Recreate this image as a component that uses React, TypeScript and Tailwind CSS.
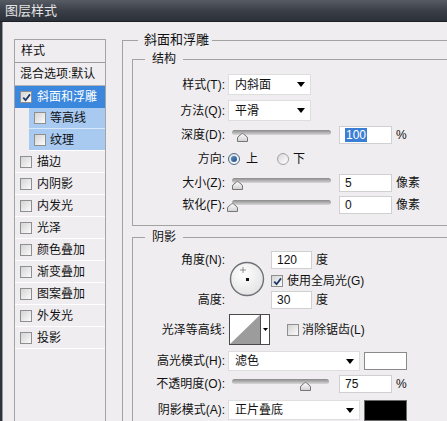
import React from 'react';

function Check({ checked = false }: { checked?: boolean }) {
  return (
    <span className="flex h-[12px] w-[12px] shrink-0 items-center justify-center border border-[#8e8f8f] bg-gradient-to-br from-[#d4d4d4] to-[#fbfbfb]">
      {checked && (
        <svg width="9" height="9" viewBox="0 0 9 9">
          <path d="M1.2 4.6 L3.6 7.2 L8 1.4" fill="none" stroke="#22386a" strokeWidth="1.8" />
        </svg>
      )}
    </span>
  );
}

function Radio({ checked = false }: { checked?: boolean }) {
  return (
    <span
      className={`flex h-[12px] w-[12px] shrink-0 items-center justify-center rounded-full border bg-gradient-to-br from-[#d9d9d9] to-white ${
        checked ? 'border-[#4e6a8a]' : 'border-[#a2a2a2]'
      }`}
    >
      {checked && <span className="h-[6px] w-[6px] rounded-full bg-gradient-to-br from-[#5c8fc4] to-[#1f4f86]" />}
    </span>
  );
}

function Select({ value, className }: { value: string; className: string }) {
  return (
    <div className={`flex items-center justify-between border border-[#dedede] bg-white pl-[6px] pr-[5px] ${className}`}>
      <span>{value}</span>
      <svg width="8" height="5" viewBox="0 0 8 5">
        <path d="M0 0 H8 L4 5 Z" fill="#000" />
      </svg>
    </div>
  );
}

function Slider({ track, thumb }: { track: string; thumb: string }) {
  return (
    <div className={`relative ml-[4px] h-[18px] shrink-0 ${track}`}>
      <div className="absolute inset-x-0 top-[4px] h-[5px] rounded-full bg-gradient-to-b from-[#8a8a8a] to-[#d8d8d8]" />
      <svg className={`absolute top-[7px] ${thumb}`} width="11" height="9" viewBox="0 0 11 9">
        <defs>
          <linearGradient id="tg" x1="0" y1="0" x2="0" y2="1">
            <stop offset="0" stopColor="#ffffff" />
            <stop offset="1" stopColor="#cfcfcf" />
          </linearGradient>
        </defs>
        <path d="M0.5 8.5 V5 Q0.5 4 2 3 L4.5 1 Q5.5 0.3 6.5 1 L9 3 Q10.5 4 10.5 5 V8.5 Z" fill="url(#tg)" stroke="#767676" />
      </svg>
    </div>
  );
}

function Field({ children, className = '' }: { children: React.ReactNode; className?: string }) {
  return (
    <div className={`flex h-[18px] shrink-0 items-center border border-[#d0d0d0] bg-white pl-[5px] ${className}`}>
      {children}
    </div>
  );
}

const others = ['描边', '内阴影', '内发光', '光泽', '颜色叠加', '渐变叠加', '图案叠加', '外发光', '投影'];

function StyleList() {
  return (
    <div className="mt-[5px] h-[400px] w-[92px] shrink-0 border border-[#a4a4a4]">
      <div className="flex h-[23px] items-center border-b border-[#9c9c9c] pl-[6px]">样式</div>
      <div className="flex h-[23px] items-center border-b border-[#b4b4b4] pl-[5px]">混合选项:默认</div>
      <div className="flex h-[22px] items-center gap-[5px] bg-[#3a87dd] pl-[5px] text-white">
        <Check checked />
        斜面和浮雕
      </div>
      <div className="ml-[14px] flex h-[21px] items-center gap-[4px] border-b border-[#d9e8f8] bg-[#a8caf1] pl-[5px]">
        <Check />
        等高线
      </div>
      <div className="ml-[14px] flex h-[22px] items-center gap-[4px] border-b border-white bg-[#a8caf1] pl-[5px]">
        <Check />
        纹理
      </div>
      {others.map((name) => (
        <div key={name} className="flex h-[22px] items-center gap-[5px] border-b border-white pl-[5px]">
          <Check />
          {name}
        </div>
      ))}
    </div>
  );
}

function Label({ children }: { children: React.ReactNode }) {
  return <div className="w-[92px] shrink-0 text-right">{children}</div>;
}

function Structure() {
  return (
    <fieldset className="ml-[9px] mt-[3px] w-[330px] border border-[#a2a2a2] p-0">
      <legend className="ml-[12px] px-[7px] leading-[16px]">结构</legend>
      <div className="pb-[11px] pt-[7px]">
        <div className="flex h-[21px] items-center">
          <Label>样式(T):</Label>
          <Select value="内斜面" className="ml-[3px] h-[21px] w-[83px]" />
        </div>
        <div className="mt-[5px] flex h-[21px] items-center">
          <Label>方法(Q):</Label>
          <Select value="平滑" className="ml-[3px] h-[21px] w-[83px]" />
        </div>
        <div className="mt-[5px] flex h-[18px] items-center">
          <Label>深度(D):</Label>
          <div className="ml-[3px] flex items-center">
            <Slider track="w-[99px]" thumb="left-[5px]" />
            <Field className="ml-[8px] w-[53px] border-[#8fbbe6] pl-[2px]">
              <span className="bg-[#3a7fd4] px-[1px] leading-[14px] text-white">100</span>
            </Field>
            <span className="ml-[4px]">%</span>
          </div>
        </div>
        <div className="mt-[6px] flex h-[18px] items-center">
          <Label>方向:</Label>
          <div className="ml-[3px] flex items-center">
            <Radio checked />
            <span className="ml-[6px]">上</span>
            <span className="ml-[19px]">
              <Radio />
            </span>
            <span className="ml-[4px]">下</span>
          </div>
        </div>
        <div className="mt-[6px] flex h-[18px] items-center">
          <Label>大小(Z):</Label>
          <div className="ml-[3px] flex items-center">
            <Slider track="w-[99px]" thumb="left-0" />
            <Field className="ml-[8px] w-[53px]">5</Field>
            <span className="ml-[4px]">像素</span>
          </div>
        </div>
        <div className="mt-[4px] flex h-[18px] items-center">
          <Label>软化(F):</Label>
          <div className="ml-[3px] flex items-center">
            <Slider track="w-[99px]" thumb="left-[-5px]" />
            <Field className="ml-[8px] w-[53px]">0</Field>
            <span className="ml-[4px]">像素</span>
          </div>
        </div>
      </div>
    </fieldset>
  );
}

function AngleDial() {
  return (
    <svg width="36" height="36" viewBox="0 0 36 36">
      <defs>
        <radialGradient id="dg" cx="0.4" cy="0.35" r="0.7">
          <stop offset="0" stopColor="#ffffff" />
          <stop offset="1" stopColor="#e2e2e2" />
        </radialGradient>
      </defs>
      <circle cx="18" cy="18" r="16.5" fill="url(#dg)" stroke="#6e7176" strokeWidth="1.4" />
      <rect x="17" y="17" width="3" height="3" fill="#111" />
      <path d="M14 6.5 V11.5 M11.5 9 H16.5" stroke="#333" strokeWidth="1" strokeDasharray="1 1" />
    </svg>
  );
}

function ContourSwatch() {
  return (
    <div className="flex h-[31px] items-stretch">
      <svg width="32" height="31" viewBox="0 0 32 31">
        <rect x="0.5" y="0.5" width="31" height="30" fill="#fff" stroke="#4a4a4a" />
        <path d="M1 30 L31 1 V30 Z" fill="#9c9c9c" />
      </svg>
      <div className="flex w-[9px] items-center justify-center border-y border-r border-[#4a4a4a] bg-white">
        <svg width="5" height="3" viewBox="0 0 5 3">
          <path d="M0 0 H5 L2.5 3 Z" fill="#000" />
        </svg>
      </div>
    </div>
  );
}

function Shading() {
  return (
    <fieldset className="ml-[9px] mt-[3px] w-[330px] border border-[#a2a2a2] p-0">
      <legend className="ml-[12px] px-[7px] leading-[16px]">阴影</legend>
      <div className="pb-[20px] pt-[6px]">
        <div className="flex">
          <div className="flex w-[92px] shrink-0 flex-col text-right">
            <div className="flex h-[18px] items-center justify-end">角度(N):</div>
            <div className="mt-[22px] flex h-[18px] items-center justify-end">高度:</div>
          </div>
          <div className="ml-[3px] w-[43px] shrink-0 pl-[1px] pt-[10px]">
            <AngleDial />
          </div>
          <div className="flex flex-col">
            <div className="flex items-center">
              <Field className="w-[41px]">120</Field>
              <span className="ml-[4px]">度</span>
            </div>
            <div className="mt-[3px] flex h-[18px] items-center gap-[4px]">
              <Check checked />
              使用全局光(G)
            </div>
            <div className="mt-[1px] flex items-center">
              <Field className="w-[41px]">30</Field>
              <span className="ml-[4px]">度</span>
            </div>
          </div>
        </div>
        <div className="mt-[5px] flex items-center">
          <Label>光泽等高线:</Label>
          <div className="ml-[4px] flex items-center">
            <ContourSwatch />
            <span className="ml-[17px]">
              <Check />
            </span>
            <span className="ml-[3px]">消除锯齿(L)</span>
          </div>
        </div>
        <div className="mt-[6px] flex h-[20px] items-center">
          <Label>高光模式(H):</Label>
          <Select value="滤色" className="ml-[3px] h-[20px] w-[132px]" />
          <div className="ml-[4px] h-[18px] w-[43px] border border-[#8a8a8a] bg-white" />
        </div>
        <div className="mt-[4px] flex h-[18px] items-center">
          <Label>不透明度(O):</Label>
          <div className="ml-[3px] flex items-center">
            <Slider track="w-[97px]" thumb="left-[68px]" />
            <Field className="ml-[10px] w-[53px]">75</Field>
            <span className="ml-[4px]">%</span>
          </div>
        </div>
        <div className="mt-[7px] flex h-[20px] items-center">
          <Label>阴影模式(A):</Label>
          <Select value="正片叠底" className="ml-[3px] h-[20px] w-[132px]" />
          <div className="ml-[4px] h-[21px] w-[43px] border border-[#6a6a6a] bg-black" />
        </div>
      </div>
    </fieldset>
  );
}

export default function App() {
  return (
    <div className="h-[421px] w-[447px] overflow-hidden bg-[#efedf0] text-[12px] leading-none text-[#111] font-['Liberation_Sans','Noto_Sans_CJK_SC',sans-serif]">
      <div className="flex h-[22px] items-center border-b border-[#1c1f25] bg-gradient-to-b from-[#565b64] via-[#3a3f48] to-[#2c3038] pl-[5px] text-[13px] text-[#e4e4e4]">
        图层样式
      </div>
      <div className="flex h-[399px]">
        <div className="w-[3px] shrink-0 border-r border-[#9a9a9a] bg-[#30343a]" />
        <div className="flex flex-1 items-start gap-[16px] pl-[11px] pt-[10px]">
          <div className="mt-[2px]">
            <StyleList />
          </div>
          <fieldset className="w-[340px] shrink-0 border border-[#a2a2a2] p-0">
            <legend className="ml-[15px] pl-[6px] pr-[3px] text-[13px] leading-[16px]">斜面和浮雕</legend>
            <div className="mt-[2px]">
              <Structure />
              <Shading />
            </div>
          </fieldset>
        </div>
      </div>
    </div>
  );
}
